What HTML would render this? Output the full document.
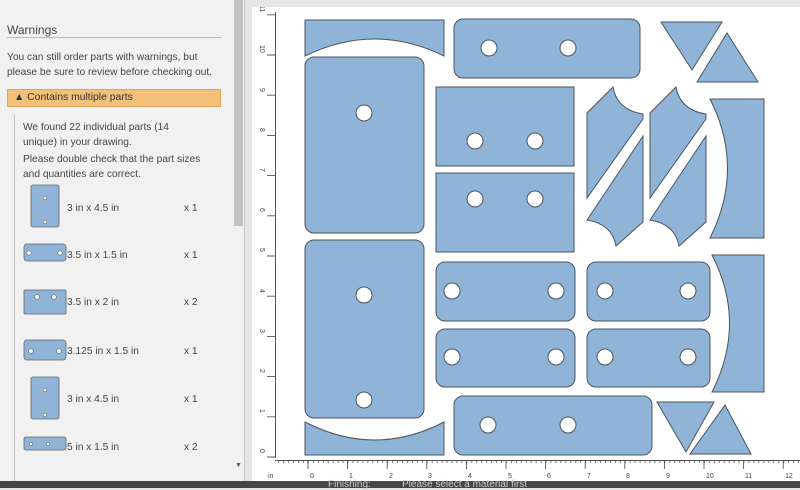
<!DOCTYPE html>
<html><head><meta charset="utf-8"><style>
*{margin:0;padding:0;box-sizing:border-box}
body{width:800px;height:488px;overflow:hidden;background:#e6e6e6;font-family:"Liberation Sans",sans-serif;position:relative}
#left{position:absolute;left:0;top:0;width:245px;height:481px;background:#f0f1f0;border-right:1px solid #c8c8c8}
.t{position:absolute;color:#444;font-size:10.2px;white-space:nowrap}
#sb{position:absolute;left:234px;top:0;width:9px;height:226px;background:#c2c2c2}
#warn{position:absolute;left:7px;top:89px;width:214px;height:18px;background:#f2c078;border:1px solid #dca55a;font-size:10.4px;color:#333;padding:2px 0 0 6px}
#bar{position:absolute;left:0;top:481px;width:800px;height:7px;background:#464646}
</style></head><body>
<div id="left">
<div class="t" style="left:7px;top:23px;font-size:12px">Warnings</div>
<div style="position:absolute;left:7px;top:37px;width:214px;height:1px;background:#bbb"></div>
<div class="t" style="left:7px;top:50px;line-height:15px">You can still order parts with warnings, but<br>please be sure to review before checking out.</div>
<div id="warn">▲ Contains multiple parts</div>
<div style="position:absolute;left:14px;top:115px;width:1px;height:366px;background:#c4c4c4"></div>
<div class="t" style="left:23px;top:120px;line-height:15px">We found 22 individual parts (14<br>unique) in your drawing.</div>
<div class="t" style="left:23px;top:152px;line-height:15px">Please double check that the part sizes<br>and quantities are correct.</div>
<svg style="position:absolute;left:0;top:180px" width="232" height="300">
<g fill="#8fb4d8" stroke="#666" stroke-width="0.8">
<rect x="31" y="5" width="28" height="42" rx="2"/>
<rect x="24" y="64" width="42" height="17" rx="3"/>
<rect x="24" y="110" width="42" height="24" rx="1"/>
<rect x="24" y="160" width="42" height="20" rx="3"/>
<rect x="31" y="197" width="28" height="42" rx="2"/>
<rect x="24" y="257" width="42" height="13" rx="2"/>
</g>
<g fill="#fff" stroke="#666" stroke-width="0.6">
<circle cx="45" cy="18" r="1.8"/><circle cx="45" cy="42" r="1.8"/>
<circle cx="29" cy="73" r="2.2"/><circle cx="60" cy="73" r="2.2"/>
<circle cx="37" cy="117" r="2.4"/><circle cx="54" cy="117" r="2.4"/>
<circle cx="31" cy="171" r="2.4"/><circle cx="59" cy="171" r="2.4"/>
<circle cx="45" cy="210" r="1.8"/><circle cx="45" cy="235" r="1.8"/>
<circle cx="31" cy="264" r="1.6"/><circle cx="48" cy="264" r="1.6"/>
</g>
</svg>
<div class="t" style="left:67px;top:203px">3 in x 4.5 in</div><div class="t" style="left:184px;top:203px">x 1</div>
<div class="t" style="left:67px;top:250px">3.5 in x 1.5 in</div><div class="t" style="left:184px;top:250px">x 1</div>
<div class="t" style="left:67px;top:297px">3.5 in x 2 in</div><div class="t" style="left:184px;top:297px">x 2</div>
<div class="t" style="left:67px;top:346px">3.125 in x 1.5 in</div><div class="t" style="left:184px;top:346px">x 1</div>
<div class="t" style="left:67px;top:394px">3 in x 4.5 in</div><div class="t" style="left:184px;top:394px">x 1</div>
<div class="t" style="left:67px;top:442px">5 in x 1.5 in</div><div class="t" style="left:184px;top:442px">x 2</div>
<div id="sb"></div>
<div style="position:absolute;left:235px;top:462px;font-size:7px;color:#555">▼</div>
</div>
<svg style="position:absolute;left:252px;top:7px" width="548" height="474" viewBox="252 7 548 474">
<defs>
<pattern id="hx" x="308" y="0" width="4.95" height="10" patternUnits="userSpaceOnUse"><rect x="0" y="0" width="0.8" height="3" fill="#555"/></pattern>
<pattern id="vy" x="0" y="457" width="10" height="5.025" patternUnits="userSpaceOnUse"><rect x="7" y="0" width="3" height="0.8" fill="#555"/></pattern>
</defs>
<rect x="252" y="7" width="548" height="474" fill="#fff"/>
<rect x="262" y="12" width="3" height="446" fill="url(#vy)" transform="translate(0,0)"/>
<rect x="272" y="12" width="3" height="446" fill="url(#vy)"/>
<rect x="275" y="12" width="1" height="446" fill="#555"/>
<rect x="275" y="461" width="525" height="3" fill="url(#hx)"/>
<rect x="275" y="460" width="525" height="1" fill="#555"/>
<g stroke="#555" stroke-width="0.9">
<path d="M308 461v8M347.6 461v8M387.2 461v8M426.8 461v8M466.4 461v8M506 461v8M545.6 461v8M585.2 461v8M624.8 461v8M664.4 461v8M704 461v8M743.6 461v8M783.2 461v8"/>
<path d="M267 457h8M267 416.8h8M267 376.6h8M267 336.4h8M267 296.2h8M267 256h8M267 215.8h8M267 175.6h8M267 135.4h8M267 95.2h8M267 55h8M267 14.8h8"/>
</g>
<g font-size="7" fill="#444" font-family="Liberation Sans">
<text x="268" y="478">in</text>
<text x="310" y="478">0</text><text x="349" y="478">1</text><text x="389" y="478">2</text><text x="428" y="478">3</text><text x="468" y="478">4</text><text x="508" y="478">5</text><text x="547" y="478">6</text><text x="587" y="478">7</text><text x="626" y="478">8</text><text x="666" y="478">9</text><text x="706" y="478">10</text><text x="745" y="478">11</text><text x="785" y="478">12</text>
<g transform="rotate(90)">
<text x="449" y="-260">0</text><text x="409" y="-260">1</text><text x="369" y="-260">2</text><text x="329" y="-260">3</text><text x="289" y="-260">4</text><text x="248" y="-260">5</text><text x="208" y="-260">6</text><text x="168" y="-260">7</text><text x="128" y="-260">8</text><text x="88" y="-260">9</text><text x="45" y="-260">10</text><text x="5" y="-260">11</text>
</g>
</g>
<g fill="#8fb4d8" stroke="#4a5560" stroke-width="1">
<path d="M305 20H444V56Q375 22 305 56Z"/>
<rect x="305" y="57" width="119" height="176" rx="9"/>
<rect x="454" y="19" width="186" height="59" rx="9"/>
<path d="M661 22H722L692 70Z"/>
<path d="M697 82H758L727 33Z"/>
<rect x="436" y="87" width="138" height="79"/>
<rect x="436" y="173" width="138" height="79"/>
<path d="M587 113L613 87Q617 110 643 114V119L587 198Z"/>
<path d="M643 136V222L616 246Q612 224 587 220Z"/>
<path d="M650 113L676 87Q680 110 706 114V119L650 198Z"/>
<path d="M706 136V222L679 246Q675 224 650 220Z"/>
<path d="M710 99H764V238H710Q745 168 710 99Z"/>
<path d="M712 255H764V392H712Q747 323 712 255Z"/>
<rect x="305" y="240" width="119" height="178" rx="9"/>
<rect x="436" y="262" width="139" height="59" rx="9"/>
<rect x="436" y="329" width="139" height="58" rx="9"/>
<rect x="587" y="262" width="123" height="59" rx="9"/>
<rect x="587" y="329" width="123" height="58" rx="9"/>
<path d="M305 422Q375 458 444 422V455H305Z"/>
<rect x="454" y="396" width="198" height="59" rx="9"/>
<path d="M657 402H714L686 452Z"/>
<path d="M690 454H751L725 405Z"/>
</g>
<g fill="#fff" stroke="#4a5560" stroke-width="1">
<circle cx="364" cy="113" r="8"/><circle cx="364" cy="295" r="8"/><circle cx="364" cy="400" r="8"/>
<circle cx="489" cy="48" r="8"/><circle cx="568" cy="48" r="8"/>
<circle cx="475" cy="141" r="8"/><circle cx="535" cy="141" r="8"/>
<circle cx="475" cy="199" r="8"/><circle cx="535" cy="199" r="8"/>
<circle cx="452" cy="291" r="8"/><circle cx="556" cy="291" r="8"/>
<circle cx="452" cy="357" r="8"/><circle cx="556" cy="357" r="8"/>
<circle cx="605" cy="291" r="8"/><circle cx="688" cy="291" r="8"/>
<circle cx="605" cy="357" r="8"/><circle cx="688" cy="357" r="8"/>
<circle cx="488" cy="425" r="8"/><circle cx="568" cy="425" r="8"/>
</g>
</svg>
<div id="bar"><span style="position:absolute;left:328px;top:-2px;font-size:10px;color:#ccc">Finishing:</span><span style="position:absolute;left:402px;top:-2px;font-size:10px;color:#ccc">Please select a material first</span></div>
</body></html>
